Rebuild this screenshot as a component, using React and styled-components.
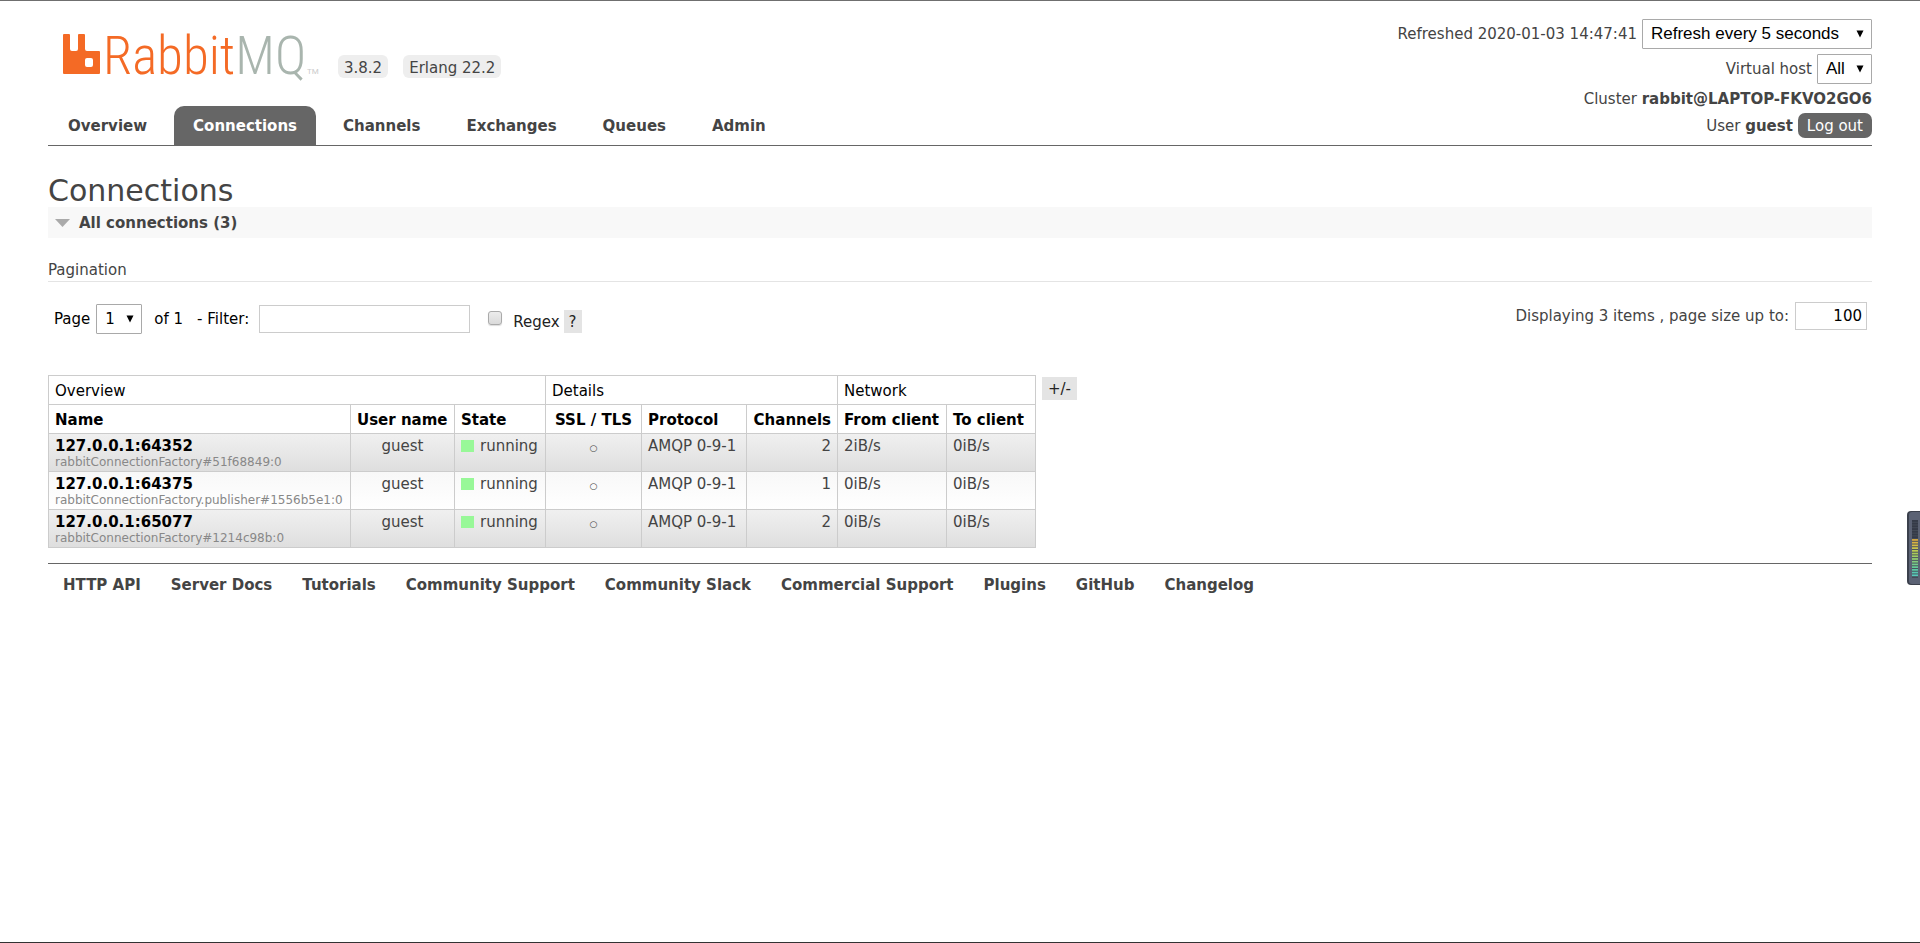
import React from "react";
import styled, { createGlobalStyle, css } from "styled-components";

const GlobalStyle = createGlobalStyle`
  *, *::before, *::after { box-sizing: border-box; }
  body {
    margin: 0;
    background: #fff;
    color: #444;
    font: 15px/20px Verdana, "DejaVu Sans", sans-serif;
  }
  a { color: inherit; text-decoration: none; }
  b { font-weight: 700; }
`;

const Page = styled.div`
  display: flex;
  flex-direction: column;
  min-height: 100vh;
  padding: 0 48px;
  border-top: 1px solid #6f6f6f;
  border-bottom: 1px solid #333;
`;

const Header = styled.header`
  display: flex;
  justify-content: space-between;
  height: 145px;
  border-bottom: 1px solid #666;
`;

const Brand = styled.div`
  display: flex;
  flex-direction: column;
  justify-content: space-between;
  padding-top: 16px;
`;

const BrandRow = styled.div`
  display: flex;
  align-items: flex-end;
  padding-left: 15px;
`;

const Logo = styled.a`
  display: block;
  margin-right: 15px;
  svg { display: block; }
`;

const Version = styled.span`
  height: 23px;
  margin: 0 15px 11px 0;
  padding: 0 6px;
  border-radius: 6px;
  background: #eee;
  line-height: 26px;
`;

const Tabs = styled.nav`
  display: flex;
  gap: 8px;
  padding-left: 1px;
`;

const Tab = styled.a`
  height: 39px;
  padding: 0 19px;
  border-radius: 10px 10px 0 0;
  font-weight: 700;
  line-height: 41px;
  ${({ $active }) => $active && css`
    background: #666;
    color: #fff;
  `}
`;

const Status = styled.div`
  display: flex;
  flex-direction: column;
  align-items: flex-end;
  gap: 5px;
  padding-top: 18px;
`;

const Account = styled.div`
  display: flex;
  flex-direction: column;
  align-items: flex-end;
  gap: 4px;
`;

const StatusLine = styled.div`
  display: flex;
  align-items: center;
  gap: 5px;
`;

const SelectBox = styled.span`
  position: relative;
  display: inline-flex;
  width: ${({ $width }) => $width};
  height: 30px;
  svg {
    position: absolute;
    right: 8px;
    top: 11px;
    pointer-events: none;
  }
`;

const Select = styled.select`
  width: 100%;
  height: 100%;
  padding: 0 20px 1px 8px;
  border: 1px solid #a9a9a9;
  border-radius: 1px;
  background: #fff;
  color: #000;
  appearance: none;
  font: ${({ $verdana }) =>
    $verdana ? '15px Verdana, "DejaVu Sans", sans-serif' : '17px "Liberation Sans", Arial, sans-serif'};
`;

const LogOut = styled.button`
  height: 25px;
  padding: 0 9px;
  border: 0;
  border-radius: 7px;
  background: #666;
  color: #fff;
  font: inherit;
`;

const Title = styled.h1`
  margin: 0;
  padding-top: 29px;
  font-size: 30px;
  font-weight: 400;
  line-height: 32px;
`;

const SectionTitle = styled.h2`
  display: flex;
  align-items: center;
  gap: 9px;
  height: 31px;
  margin: 0;
  padding-left: 7px;
  background: #f8f8f8;
  font-size: 15px;
  font-weight: 700;
`;

const SubTitle = styled.h3`
  margin: 22px 0 0;
  padding-bottom: 1px;
  border-bottom: 1px solid #e4e4e4;
  font-size: 15px;
  font-weight: 400;
`;

const Pagination = styled.div`
  display: flex;
  justify-content: space-between;
  align-items: flex-start;
  padding: 20px 5px 0 6px;
`;

const Controls = styled.div`
  display: flex;
  align-items: center;
  padding-top: 2px;
  color: #000;
`;

const Label = styled.label`
  display: flex;
  align-items: center;
  gap: ${({ $gap }) => $gap || "6px"};
`;

const PageCount = styled.span`
  margin: 0 14px 0 12px;
`;

const Field = styled.input`
  width: ${({ $width }) => $width};
  height: 28px;
  padding: 0 4px;
  border: 1px solid #ccc;
  color: #000;
  font: inherit;
  text-align: ${({ $align }) => $align || "left"};
`;

const Regex = styled.div`
  display: flex;
  align-items: center;
  gap: 4px;
  margin-left: 18px;
  color: #222;
`;

const CheckBox = styled.input`
  width: 14px;
  height: 14px;
  margin: 0 5px 2px 0;
  border: 1px solid #aaa;
  border-radius: 3px;
  background: linear-gradient(#ececec, #dadada);
  box-shadow: 0 1px 1px #ddd;
  appearance: none;
`;

const RegexText = styled.span`
  padding-top: 5px;
`;

const MiniButton = styled.button`
  height: 23px;
  padding: 0 ${({ $pad }) => $pad};
  border: 0;
  background: #e4e4e4;
  color: #222;
  font: inherit;
  margin-top: ${({ $top }) => $top || "0"};
`;

const TableRow = styled.div`
  display: flex;
  align-items: flex-start;
  gap: 6px;
  margin-top: 41px;
`;

const Table = styled.table`
  border-collapse: collapse;
  th, td { border: 1px solid #ccc; }
`;

const Col = styled.col`
  width: ${({ $width }) => $width}px;
`;

const Th = styled.th`
  height: 29px;
  padding: 2px 6px 0;
  color: #000;
  font-weight: ${({ $group }) => ($group ? 400 : 700)};
  text-align: ${({ $align }) => $align || "left"};
  white-space: nowrap;
`;

const Tr = styled.tr`
  background: linear-gradient(#f8f8f8, #fff);
  &:nth-child(odd) { background: linear-gradient(#f0f0f0, #dedede); }
`;

const Td = styled.td`
  height: 38px;
  padding: 2px 6px 0;
  text-align: ${({ $align }) => $align || "left"};
  vertical-align: top;
  white-space: nowrap;
`;

const ConnectionLink = styled.a`
  display: block;
  color: #000;
  font-weight: 700;
`;

const ClientName = styled.span`
  display: block;
  height: 15px;
  color: #888;
  font-size: 12px;
  line-height: 12px;
`;

const State = styled.span`
  display: flex;
  align-items: center;
  gap: 6px;
  &::before {
    content: "";
    width: 13px;
    height: 12px;
    background: #98f898;
  }
`;

const Ring = styled.span`
  font-size: 9px;
`;

const Footer = styled.footer`
  display: flex;
  flex-wrap: wrap;
  gap: 30px;
  margin-top: 15px;
  padding: 11px 15px;
  border-top: 1px solid #666;
  font-weight: 700;
`;

const Meter = styled.div`
  position: fixed;
  top: 511px;
  right: 0;
  svg { display: block; }
`;

const Arrow = () => (
  <svg width="8" height="8" viewBox="0 0 8 8" aria-hidden="true">
    <path d="M0.5 0.5H7.5L4 7.5Z" fill="#000" />
  </svg>
);

const Dropdown = ({ id, label, value, width, verdana }) => (
  <SelectBox $width={width}>
    <Select id={id} aria-label={label} $verdana={verdana}>
      <option>{value}</option>
    </Select>
    <Arrow />
  </SelectBox>
);

const RabbitLogo = () => (
  <svg width="260" height="72" viewBox="0 -12 260 72" role="img" aria-label="RabbitMQ">
    <path
      fillRule="evenodd"
      fill="#f46a25"
      d="M1 5H6Q7 5 7 6V20Q7 22 9 22H13Q15 22 15 20V6Q15 5 16 5H21Q22 5 22 6V20Q22 22 24 22H36Q37 22 37 23V44Q37 45 36 45H1Q0 45 0 44V6Q0 5 1 5ZM24 29Q22 29 22 31V36Q22 38 24 38H28Q30 38 30 36V31Q30 29 28 29Z"
    />
    <text
      x="40"
      y="45"
      fontFamily='"Roboto Condensed", Roboto, sans-serif'
      fontWeight="300"
      fontSize="53"
    >
      <tspan fill="#f46a25">Rabbit</tspan>
      <tspan fill="#a9b5ae">MQ</tspan>
    </text>
    <text x="244" y="45" fontFamily="Roboto, sans-serif" fontSize="8" fill="#ccc">TM</text>
  </svg>
);

const meterColors = [
  "#343a47", "#343a47", "#343a47", "#343a47", "#343a47", "#343a47", "#343a47",
  "#d5a83f", "#d8b444", "#d5bd48", "#c9c44e", "#bccb52", "#aacb5a", "#a0ce66",
  "#90cc72", "#82cc80", "#74cc8c", "#66ca98", "#5cc8a4", "#58c8b0", "#58cabb",
];

const LevelMeter = () => (
  <Meter>
    <svg width="13" height="74" viewBox="0 0 13 74" aria-hidden="true">
      <path d="M13 0H4Q0 0 0 4V70Q0 74 4 74H13Z" fill="#3b404c" />
      <path d="M13 1H5Q2 1 2 4V70Q2 73 5 73H13Z" fill="#5b6274" />
      <rect x="5" y="9" width="6" height="58" fill="#454c58" />
      {meterColors.map((color, i) => (
        <rect key={i} x="5" y={9 + i * 2.72} width="6" height="1.8" fill={color} />
      ))}
    </svg>
  </Meter>
);

const tabs = ["Overview", "Connections", "Channels", "Exchanges", "Queues", "Admin"];

const groups = [["Overview", 3], ["Details", 3], ["Network", 2]];

const columns = [
  { name: "Name", width: 302 },
  { name: "User name", width: 104 },
  { name: "State", width: 91 },
  { name: "SSL / TLS", width: 96, align: "center" },
  { name: "Protocol", width: 105 },
  { name: "Channels", width: 91, align: "right" },
  { name: "From client", width: 109 },
  { name: "To client", width: 89 },
];

const connections = [
  { name: "127.0.0.1:64352", client: "rabbitConnectionFactory#51f68849:0", channels: 2, from: "2iB/s", to: "0iB/s" },
  { name: "127.0.0.1:64375", client: "rabbitConnectionFactory.publisher#1556b5e1:0", channels: 1, from: "0iB/s", to: "0iB/s" },
  { name: "127.0.0.1:65077", client: "rabbitConnectionFactory#1214c98b:0", channels: 2, from: "0iB/s", to: "0iB/s" },
];

const footerLinks = [
  "HTTP API", "Server Docs", "Tutorials", "Community Support", "Community Slack",
  "Commercial Support", "Plugins", "GitHub", "Changelog",
];

export default function App() {
  return (
    <>
      <GlobalStyle />
      <Page>
        <Header>
          <Brand>
            <BrandRow>
              <Logo href="#"><RabbitLogo /></Logo>
              <Version>3.8.2</Version>
              <Version>Erlang 22.2</Version>
            </BrandRow>
            <Tabs>
              {tabs.map((tab) => (
                <Tab key={tab} href="#" $active={tab === "Connections"}>{tab}</Tab>
              ))}
            </Tabs>
          </Brand>
          <Status>
            <StatusLine>
              <span>Refreshed 2020-01-03 14:47:41</span>
              <Dropdown id="refresh" label="Refresh interval" value="Refresh every 5 seconds" width="230px" />
            </StatusLine>
            <StatusLine>
              <label htmlFor="vhost">Virtual host</label>
              <Dropdown id="vhost" value="All" width="55px" />
            </StatusLine>
            <Account>
              <StatusLine><span>Cluster <b>rabbit@LAPTOP-FKVO2GO6</b></span></StatusLine>
              <StatusLine>
                <span>User <b>guest</b></span>
                <LogOut type="button">Log out</LogOut>
              </StatusLine>
            </Account>
          </Status>
        </Header>

        <main>
          <Title>Connections</Title>
          <SectionTitle>
            <svg width="15" height="8" viewBox="0 0 15 8" aria-hidden="true">
              <path d="M0 0H15L7.5 8Z" fill="#aaa" />
            </svg>
            All connections (3)
          </SectionTitle>
          <SubTitle>Pagination</SubTitle>
          <Pagination>
            <Controls>
              <Label htmlFor="page">
                Page
                <Dropdown id="page" value="1" width="46px" verdana />
              </Label>
              <PageCount>of 1</PageCount>
              <Label $gap="10px">
                - Filter:
                <Field type="text" $width="211px" />
              </Label>
              <Regex>
                <Label>
                  <CheckBox type="checkbox" />
                  <RegexText>Regex</RegexText>
                </Label>
                <MiniButton type="button" $pad="5px" $top="5px">?</MiniButton>
              </Regex>
            </Controls>
            <Label>
              Displaying 3 items , page size up to:
              <Field type="text" defaultValue="100" $width="72px" $align="right" />
            </Label>
          </Pagination>

          <TableRow>
            <Table>
              <colgroup>
                {columns.map(({ name, width }) => (
                  <Col key={name} $width={width} />
                ))}
              </colgroup>
              <thead>
                <tr>
                  {groups.map(([name, span]) => (
                    <Th key={name} colSpan={span} $group>{name}</Th>
                  ))}
                </tr>
                <tr>
                  {columns.map(({ name, align }) => (
                    <Th key={name} $align={align}>{name}</Th>
                  ))}
                </tr>
              </thead>
              <tbody>
                {connections.map((row) => (
                  <Tr key={row.name}>
                    <Td>
                      <ConnectionLink href="#">{row.name}</ConnectionLink>
                      <ClientName>{row.client}</ClientName>
                    </Td>
                    <Td $align="center">guest</Td>
                    <Td><State>running</State></Td>
                    <Td $align="center"><Ring>○</Ring></Td>
                    <Td>AMQP 0-9-1</Td>
                    <Td $align="right">{row.channels}</Td>
                    <Td>{row.from}</Td>
                    <Td>{row.to}</Td>
                  </Tr>
                ))}
              </tbody>
            </Table>
            <MiniButton type="button" $pad="6px" $top="2px">+/-</MiniButton>
          </TableRow>
        </main>

        <Footer>
          {footerLinks.map((link) => (
            <a key={link} href="#">{link}</a>
          ))}
        </Footer>
      </Page>
      <LevelMeter />
    </>
  );
}
